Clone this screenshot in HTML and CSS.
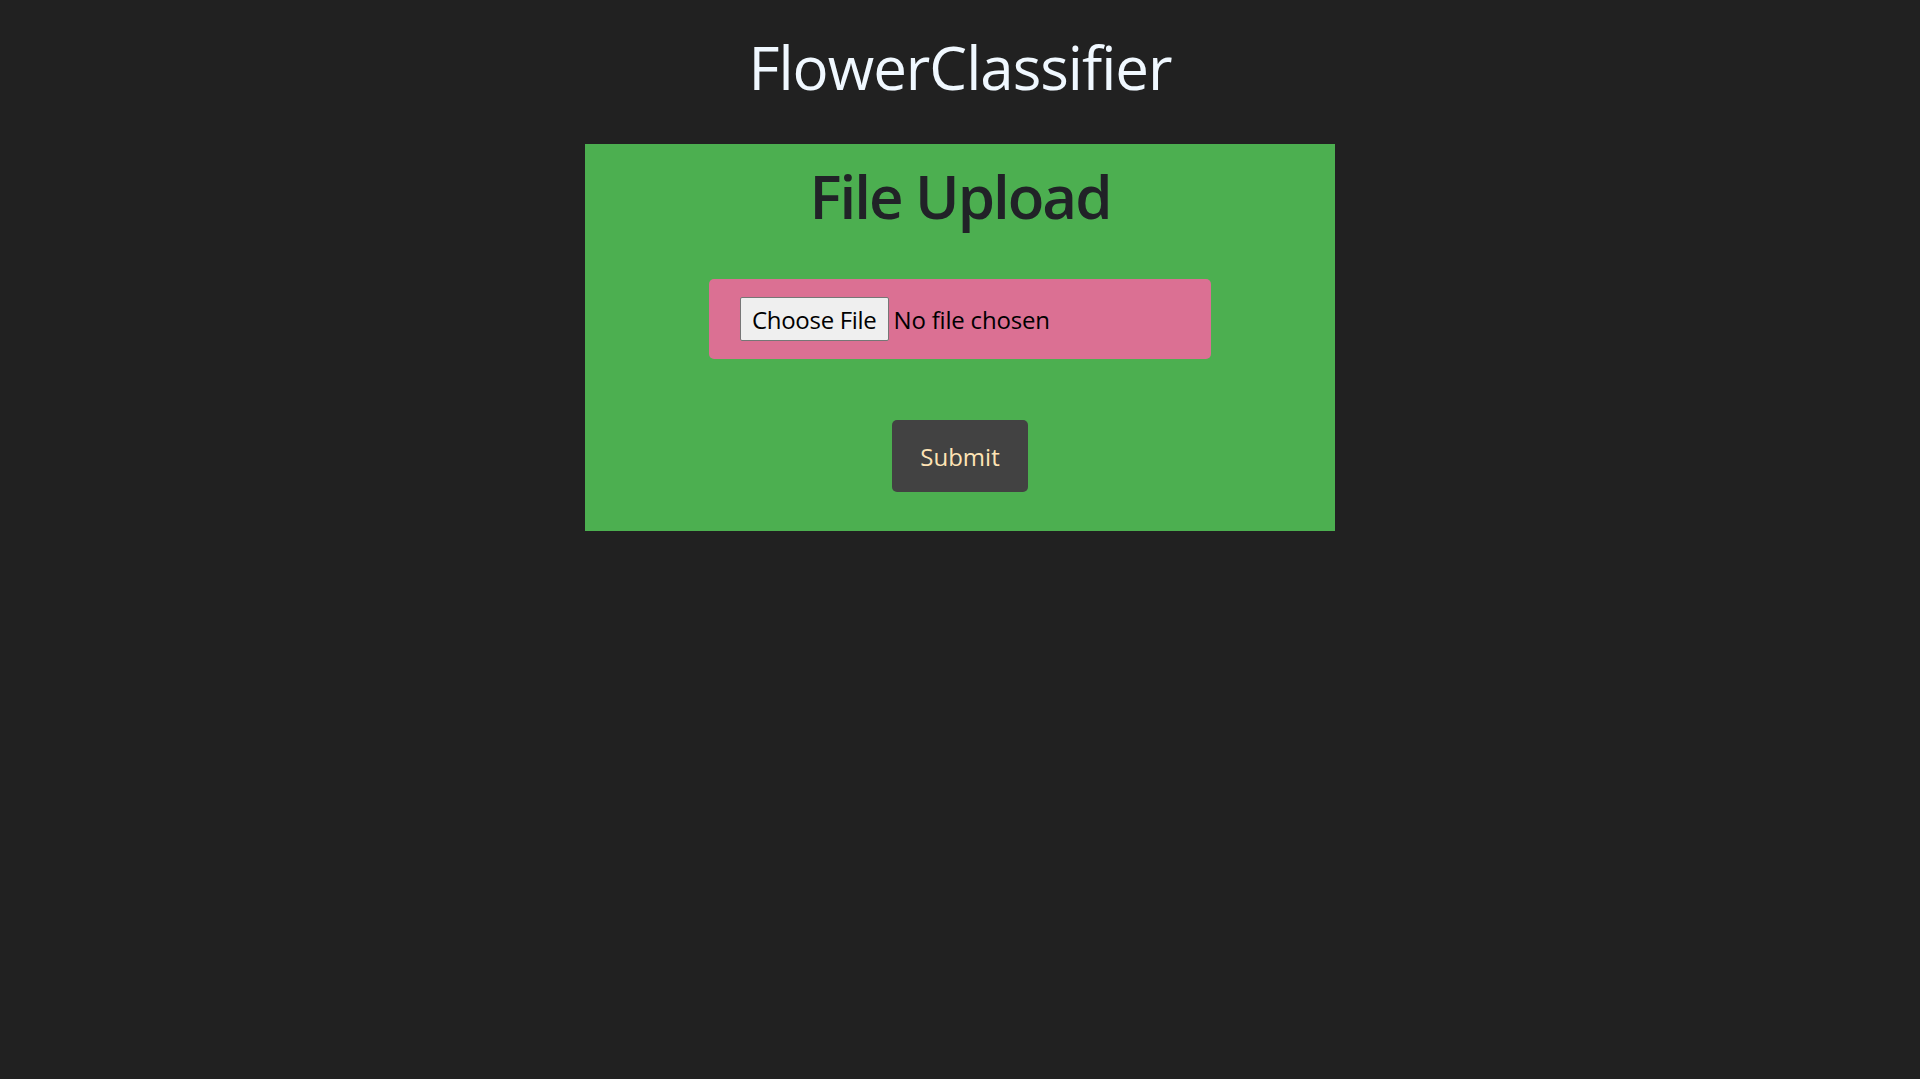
FILE: index.html
```html
<!DOCTYPE html>
<html lang="en">
<head>
<meta charset="utf-8">
<title>FlowerClassifier</title>
<link rel="stylesheet" href="styles.css">
</head>
<body>
  <header class="header">
    <h1 class="title">FlowerClassifier</h1>
  </header>
  <main class="card">
    <h2 class="card-title">File Upload</h2>
    <form class="upload-form">
      <div class="file-box">
        <input class="file-input" type="file" name="file">
      </div>
      <button class="submit" type="button">Submit</button>
    </form>
  </main>
</body>
</html>
```
FILE: styles.css
```css
html, body {
  margin: 0;
  padding: 0;
}
body {
  background: #212121;
  font-family: "Open Sans", "Noto Sans", sans-serif;
  display: flex;
  flex-direction: column;
  align-items: center;
  min-height: 1079px;
}
.header {
  padding-top: 26px;
  padding-bottom: 36px;
}
.title {
  margin: 0;
  font-size: 60px;
  font-weight: 500;
  letter-spacing: -1px;
  color: #f0f8ff;
  line-height: normal;
}
.card {
  width: 750px;
  box-sizing: border-box;
  background: #4caf50;
  padding: 11px 0 39px;
  display: flex;
  flex-direction: column;
  align-items: center;
}
.card-title {
  margin: 0 0 42px;
  font-size: 60px;
  font-weight: 600;
  letter-spacing: -2px;
  color: #212227;
  line-height: normal;
}
.upload-form {
  display: flex;
  flex-direction: column;
  align-items: center;
  gap: 61px;
}
.file-box {
  width: 502px;
  box-sizing: border-box;
  padding: 18px 31px;
  background: #db7093;
  border-radius: 5px;
  display: flex;
}
.file-input {
  font-family: "Open Sans", "Noto Sans", sans-serif;
  font-size: 24px;
  letter-spacing: -0.2px;
  color: #000;
}
.file-input::file-selector-button {
  font-family: inherit;
  font-size: 24px;
  letter-spacing: -0.3px;
  height: 44px;
  padding: 0 11px;
  margin-right: 5px;
  background: #efefef;
  border: 1px solid #767676;
  border-radius: 2px;
  color: #000;
}
.submit {
  width: 136px;
  height: 72px;
  border: none;
  border-radius: 5px;
  background: #424242;
  color: #ffe4b5;
  font-family: "Open Sans", "Noto Sans", sans-serif;
  font-size: 24px;
  padding: 0;
}
```
